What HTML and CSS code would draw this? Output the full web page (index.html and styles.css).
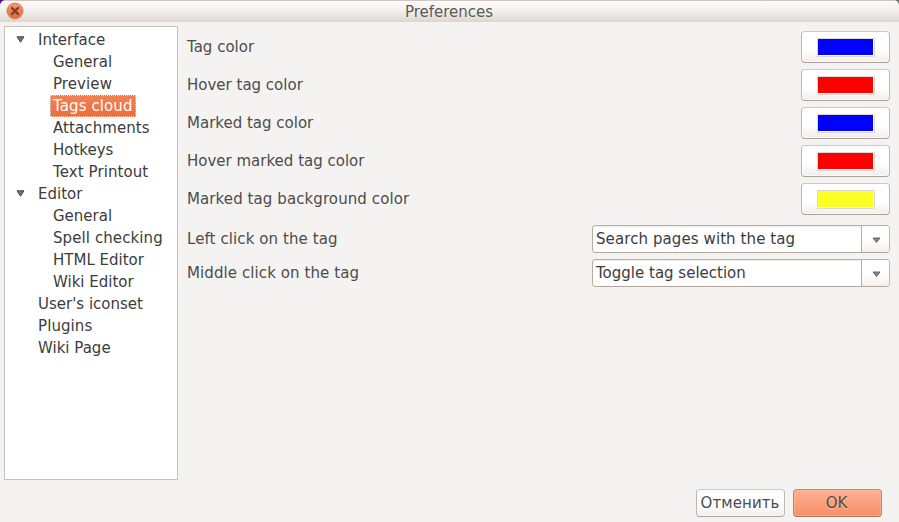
FILE: index.html
```html
<!DOCTYPE html>
<html lang="en">
<head>
<meta charset="utf-8">
<title>Preferences</title>
<link rel="stylesheet" href="styles.css">
</head>
<body>
<div class="window">
  <header class="titlebar">
    <svg class="close" width="18" height="18" viewBox="0 0 18 18">
      <defs><linearGradient id="g" x1="0" y1="0" x2="0" y2="1"><stop offset="0" stop-color="#f8996f"/><stop offset="1" stop-color="#ee6538"/></linearGradient></defs>
      <circle cx="9" cy="9" r="8.8" fill="#c9c1b9"/>
      <circle cx="9" cy="9" r="7.6" fill="url(#g)" stroke="#df744e" stroke-width=".8"/>
      <path d="M5.3 5.3l7.4 7.4M12.7 5.3l-7.4 7.4" stroke="#744031" stroke-width="2.3"/>
    </svg>
    <h1 class="title">Preferences</h1>
  </header>
  <main class="content">
    <ul class="tree">
      <li class="root"><svg class="expander" width="9" height="7" viewBox="0 0 9 7"><path d="M1 .8h7L4.5 6.2z" fill="#777" stroke="#444"/></svg>Interface</li>
      <li class="child"><span>General</span></li>
      <li class="child"><span class="wide">Preview</span></li>
      <li class="child"><span class="selected wide">Tags cloud</span></li>
      <li class="child"><span class="wide">Attachments</span></li>
      <li class="child"><span>Hotkeys</span></li>
      <li class="child"><span class="wide">Text Printout</span></li>
      <li class="root"><svg class="expander" width="9" height="7" viewBox="0 0 9 7"><path d="M1 .8h7L4.5 6.2z" fill="#777" stroke="#444"/></svg>Editor</li>
      <li class="child"><span>General</span></li>
      <li class="child"><span class="wide">Spell checking</span></li>
      <li class="child"><span>HTML Editor</span></li>
      <li class="child"><span>Wiki Editor</span></li>
      <li class="root leaf">User's iconset</li>
      <li class="root leaf wide">Plugins</li>
      <li class="root leaf">Wiki Page</li>
    </ul>
    <section class="form">
      <div class="row"><span>Tag color</span><button class="button picker"><i class="swatch blue"></i></button></div>
      <div class="row"><span>Hover tag color</span><button class="button picker"><i class="swatch red"></i></button></div>
      <div class="row"><span>Marked tag color</span><button class="button picker"><i class="swatch blue"></i></button></div>
      <div class="row"><span>Hover marked tag color</span><button class="button picker"><i class="swatch red"></i></button></div>
      <div class="row"><span class="wide">Marked tag background color</span><button class="button picker"><i class="swatch yellow"></i></button></div>
      <div class="row choice first"><span class="wide">Left click on the tag</span><div class="combo"><span class="value wide">Search pages with the tag</span><span class="arrow"><svg width="9" height="7" viewBox="0 0 9 7"><path d="M1 1h7L4.5 5.5z" fill="#858585" stroke="#666"/></svg></span></div></div>
      <div class="row choice"><span class="wide">Middle click on the tag</span><div class="combo"><span class="value">Toggle tag selection</span><span class="arrow"><svg width="9" height="7" viewBox="0 0 9 7"><path d="M1 1h7L4.5 5.5z" fill="#858585" stroke="#666"/></svg></span></div></div>
    </section>
  </main>
  <footer class="actions">
    <button class="button cancel">Отменить</button>
    <button class="button primary">OK</button>
  </footer>
</div>
</body>
</html>
```
FILE: styles.css
```css
* { box-sizing: border-box; }
body {
  margin: 0;
  overflow: hidden;
  background: linear-gradient(90deg, #4b168b 50%, #777 50%);
  color: #4c4c4c;
  font: 15px/22px "DejaVu Sans", sans-serif;
}
.window {
  display: flex;
  flex-direction: column;
  height: 522px;
  overflow: hidden;
  border-radius: 6px 6px 0 0;
  background: #f5f3f2;
}
.titlebar {
  display: flex;
  align-items: center;
  height: 22px;
  padding-left: 6px;
  border-top: 1px solid #d3c6bc;
  background: linear-gradient(#fdfcfb, #f3f0ed 45%, #ddd6cf);
}
.close { flex: none; margin-bottom: 1px; }
.title {
  flex: 1;
  margin: 0 25px 0 0;
  text-align: center;
  font-size: 15px;
  font-weight: normal;
  color: #5a5a56;
}
.wide { letter-spacing: .09px; }
.content {
  display: flex;
  gap: 9px;
  height: 458px;
  padding: 4px 9px 0 4px;
}
.tree {
  width: 174px;
  height: 454px;
  margin: 0;
  padding: 2px 0 0;
  list-style: none;
  border: 1px solid #c9c1ba;
  background: #fff;
  color: #3c3c3c;
}
.tree li { display: flex; align-items: center; height: 22px; white-space: nowrap; }
.root { padding-left: 11px; }
.root.leaf { padding-left: 33px; }
.expander { margin: 0 13px 2px 0; }
.child { padding-left: 45px; }
.child span { height: 22px; padding: 0 3px; }
.child .selected {
  width: 86px;
  line-height: 20px;
  padding: 0 2px;
  border: 1px dotted #fbd9ca;
  background: linear-gradient(#f38052, #ec6e3d);
  color: #fff;
}
.form { flex: 1; padding-top: 5px; }
.row {
  display: flex;
  align-items: center;
  justify-content: space-between;
  height: 32px;
  margin-bottom: 6px;
}
.row.choice { height: 28px; }
.row.first { margin-top: 10px; }
.button {
  display: flex;
  align-items: center;
  justify-content: center;
  width: 89px;
  height: 28px;
  padding: 0;
  border: 1px solid #c6beb7;
  border-color: #cec8c2 #bfb6ae #aca198;
  border-radius: 4px;
  background: linear-gradient(#fff 60%, #f1edea);
  box-shadow: inset 0 0 0 1px #ffffffb0;
  color: #4c4c4c;
  font: inherit;
}
.cancel { padding-right: 1px; letter-spacing: .1px; }
.picker { height: 32px; padding-top: 1px; }
.swatch { width: 58px; height: 19px; border: 1px solid #ded8d2; padding: 0 1px 1px 0; background: #fff; }
.swatch::before { content: ""; display: block; height: 16px; background: var(--color); }
.blue { --color: #00f; }
.red { --color: #f00; }
.yellow { --color: #fcff24; }
.combo {
  display: flex;
  width: 298px;
  height: 28px;
  border: 1px solid #b9aca2;
  border-color: #b9aca2 #c2b9b2 #b3a79d #b9aca2;
  border-radius: 4px;
  background: #fff;
  overflow: hidden;
  color: #3c3c3c;
}
.value { flex: 1; padding-left: 3px; line-height: 26px; box-shadow: inset 0 1px #efedeb; }
.arrow {
  display: flex;
  align-items: center;
  justify-content: center;
  width: 28px;
  padding: 3px 0 0 1px;
  border-left: 1px solid #b9aca2;
  background: linear-gradient(#fff 50%, #f3f0ed);
}
.actions {
  display: flex;
  justify-content: flex-end;
  gap: 8px;
  padding: 9px 17px 0;
}
.primary {
  padding-right: 2px;
  border-color: #bd8a74 #b9836c #a9765f;
  background: linear-gradient(#ffb294, #f68e66);
  box-shadow: inset 0 0 0 1px #ffbb9e90;
  text-shadow: 0 1px #ffc2a8;
}
```
